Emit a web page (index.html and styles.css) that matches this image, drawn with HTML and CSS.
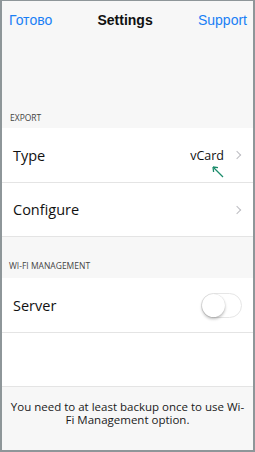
FILE: index.html
```html
<!DOCTYPE html>
<html>
<head>
    <title>Settings</title>
    <link rel="stylesheet" href="styles.css">
</head>
<body>
    <div class="phone">
        <div class="navbar">
            <span class="nav-btn">Готово</span>
            <span class="nav-title">Settings</span>
            <span class="nav-btn">Support</span>
        </div>

        <div class="section-label export-label">EXPORT</div>
        <div class="group">
            <div class="row">
                <span class="row-title">Type</span>
                <span class="row-value">vCard</span>
                <span class="chevron"></span>
                <svg class="hint-arrow" width="14" height="14" viewBox="0 0 14 14">
                    <path d="M12 12 L3 3" stroke="#1b8c6b" stroke-width="1.3" fill="none"/>
                    <path d="M2 2 L2.6 7 M2 2 L7 2.6" stroke="#1b8c6b" stroke-width="1.3" fill="none"/>
                </svg>
            </div>
            <div class="row">
                <span class="row-title">Configure</span>
                <span class="chevron"></span>
            </div>
        </div>

        <div class="section-label wifi-label">WI-FI MANAGEMENT</div>
        <div class="group">
            <div class="row">
                <span class="row-title">Server</span>
                <span class="toggle"><span class="knob"></span></span>
            </div>
            <div class="row"></div>
        </div>

        <p class="footer-note">You need to at least backup once to use Wi-Fi Management option.</p>
    </div>
</body>
</html>
```

FILE: styles.css
```css
* {
    box-sizing: border-box;
}

body {
    margin: 0;
    padding: 0;
    font-family: "Open Sans", sans-serif;
}

.phone {
    width: 255px;
    height: 452px;
    border: solid #8e9699;
    border-width: 1px 2px 2px 2px;
    background: #f7f7f7;
    display: flex;
    flex-direction: column;
    overflow: hidden;
}

.navbar {
    height: 37px;
    display: flex;
    align-items: center;
    justify-content: space-between;
    padding: 0 6px 0 7px;
    font-family: "Liberation Sans", Arial, sans-serif;
    font-size: 14px;
}

.nav-btn {
    color: #1a7ff5;
}

.nav-title {
    color: #111;
    font-weight: bold;
    font-size: 14px;
}

.section-label {
    font-size: 8.5px;
    color: #444;
    padding-left: 8px;
    display: flex;
    align-items: flex-end;
}

.export-label {
    height: 90px;
    padding-bottom: 5px;
}

.wifi-label {
    height: 41px;
    padding-bottom: 7px;
    padding-left: 7px;
}

.group {
    background: #fff;
    border-bottom: 1px solid #e4e4e4;
}

.row {
    height: 54px;
    display: flex;
    align-items: center;
    padding: 0 11px 0 11px;
    position: relative;
}

.row + .row {
    border-top: 1px solid #e4e4e4;
}

.row-title {
    flex: 1;
    font-size: 14.5px;
    color: #111;
}

.row-value {
    font-size: 12.5px;
    color: #111;
    margin-right: 10px;
}

.chevron {
    width: 6px;
    height: 6px;
    border-top: 1.2px solid #bdbdc2;
    border-right: 1.2px solid #bdbdc2;
    transform: rotate(45deg);
    margin-right: 2px;
}

.hint-arrow {
    position: absolute;
    left: 209px;
    top: 37px;
}

.toggle {
    width: 41px;
    height: 25px;
    border-radius: 13px;
    border: 1px solid #e6e6e6;
    background: #fff;
    position: relative;
}

.knob {
    position: absolute;
    left: 0;
    top: 0;
    width: 23px;
    height: 23px;
    border-radius: 50%;
    background: #fff;
    box-shadow: 0 2px 3px rgba(0, 0, 0, 0.25), 0 0 1px rgba(0, 0, 0, 0.2);
}

.footer-note {
    margin: 0;
    padding: 13px 8px 0;
    text-align: center;
    font-size: 11.5px;
    line-height: 13px;
    color: #1a1a1a;
}
```
